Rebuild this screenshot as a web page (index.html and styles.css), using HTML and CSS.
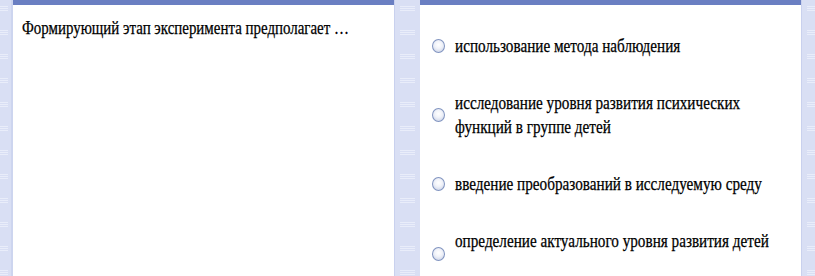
FILE: index.html
```html
<!DOCTYPE html>
<html lang="ru">
<head>
    <meta charset="UTF-8">
    <title>Тест</title>
    <link rel="stylesheet" href="styles.css">
</head>
<body>
    <div class="slide">
        <div class="rail rail-left"></div>

        <!-- Question -->
        <div class="panel question">
            <p class="q-text"><span class="squeeze">Формирующий этап эксперимента предполагает …</span></p>
        </div>

        <div class="rail rail-mid"></div>

        <!-- Answers -->
        <div class="panel answers">
            <label class="option">
                <span class="radio"></span>
                <span class="opt-text squeeze">использование метода наблюдения</span>
            </label>
            <label class="option">
                <span class="radio"></span>
                <span class="opt-text squeeze">исследование уровня развития психических<br>функций в группе детей</span>
            </label>
            <label class="option">
                <span class="radio"></span>
                <span class="opt-text squeeze">введение преобразований в исследуемую среду</span>
            </label>
            <label class="option option-low">
                <span class="radio"></span>
                <span class="opt-text squeeze">определение актуального уровня развития детей</span>
            </label>
        </div>

        <div class="rail rail-right"></div>
    </div>
</body>
</html>
```

FILE: styles.css
```css
/* Global */
body, html {
    margin: 0;
    padding: 0;
    width: 100%;
    height: 100%;
    overflow: hidden;
    background-color: #d9dff4;
    font-family: "Liberation Serif", serif;
    color: #000;
}

.slide {
    display: flex;
    height: 276px;
}

/* Striped side rails */
.rail {
    background-color: #d9dff4;
    background-image: repeating-linear-gradient(to bottom,
        transparent 0, transparent 6px,
        #e9edfa 6px, #e9edfa 7px,
        transparent 7px, transparent 8px,
        #e9edfa 8px, #e9edfa 9px,
        transparent 9px, transparent 10px,
        #e9edfa 10px, #e9edfa 11px,
        transparent 11px, transparent 24px);
    background-repeat: no-repeat;
}

.rail-left {
    width: 13px;
    background-size: 8px 100%;
    box-shadow: inset -2px 0 0 #cdd5ef;
}

.rail-mid {
    width: 26px;
    background-size: 15px 100%;
    background-position: 6px 0;
    box-shadow: inset 1px 0 0 #c9d1ee;
}

.rail-right {
    width: 14px;
    background-size: 8px 100%;
    background-position: 6px 0;
    box-shadow: inset 1px 0 0 #c9d1ee;
}

/* Panels */
.panel {
    width: 381px;
    background: #fff;
    border-top: 5px solid #6a7fc2;
    box-sizing: border-box;
}

/* the screenshot is squeezed sideways, so the text is too */
.squeeze {
    display: inline-block;
    white-space: nowrap;
    transform: scaleX(0.84);
    transform-origin: left center;
    -webkit-text-stroke: 0.25px #000;
}

.q-text {
    margin: 0;
    padding: 11px 0 0 9px;
    font-size: 17.8px;
    line-height: 24px;
}

.answers {
    display: flex;
    flex-direction: column;
    gap: 33px;
    padding: 29px 0 0 12px;
}

.option {
    display: flex;
    align-items: center;
    gap: 10px;
}

.option-low {
    align-items: flex-start;
}

.option-low .radio {
    margin-top: 18px;
}

.radio {
    width: 11px;
    height: 12px;
    flex: none;
    border-radius: 50%;
    border: 1.5px solid #8194c0;
    background: radial-gradient(circle at 50% 40%, #ffffff 0, #f1f3f9 40%, #c4cde3 100%);
}

.opt-text {
    font-size: 18.1px;
    line-height: 24px;
}
```
